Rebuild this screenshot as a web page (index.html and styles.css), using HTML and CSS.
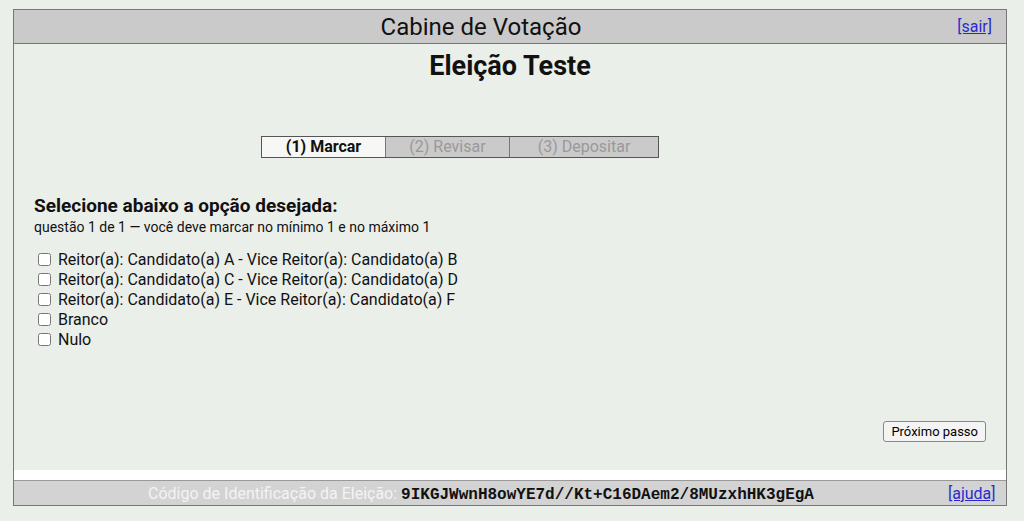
FILE: index.html
```html
<!DOCTYPE html>
<html lang="pt-BR">
<head>
    <meta charset="UTF-8">
    <title>Cabine de Votação</title>
    <link rel="stylesheet" href="styles.css">
</head>
<body>
    <div class="booth">
        <!-- Header -->
        <div class="bar top-bar">
            <div class="bar-title">Cabine de Votação</div>
            <div class="bar-link"><a href="#">[sair]</a></div>
        </div>

        <!-- Main content -->
        <div class="content">
            <h1>Eleição Teste</h1>

            <div class="steps">
                <div class="step current">(1) Marcar</div>
                <div class="step">(2) Revisar</div>
                <div class="step">(3) Depositar</div>
            </div>

            <div class="question">
                <h2>Selecione abaixo a opção desejada:</h2>
                <p class="hint">questão 1 de 1 — você deve marcar no mínimo 1 e no máximo 1</p>

                <ul class="answers">
                    <li><label><input type="checkbox"> Reitor(a): Candidato(a) A - Vice Reitor(a): Candidato(a) B</label></li>
                    <li><label><input type="checkbox"> Reitor(a): Candidato(a) C - Vice Reitor(a): Candidato(a) D</label></li>
                    <li><label><input type="checkbox"> Reitor(a): Candidato(a) E - Vice Reitor(a): Candidato(a) F</label></li>
                    <li><label><input type="checkbox"> Branco</label></li>
                    <li><label><input type="checkbox"> Nulo</label></li>
                </ul>
            </div>

            <div class="actions">
                <button type="button">Próximo passo</button>
            </div>
        </div>

        <!-- Footer -->
        <div class="bar bottom-bar">
            <div class="bar-title">Código de Identificação da Eleição: <code>9IKGJWwnH8owYE7d//Kt+C16DAem2/8MUzxhHK3gEgA</code></div>
            <div class="bar-link"><a href="#">[ajuda]</a></div>
        </div>
    </div>
</body>
</html>
```

FILE: styles.css
```css
body {
    font-family: Roboto, "Liberation Sans", sans-serif;
    margin: 0;
    padding: 9px 17px 0 13px;
    background: #ebefea;
    color: #111;
}

.booth {
    border: 1px solid #777;
    background: #fff;
}

.bar {
    display: flex;
    align-items: center;
}

.bar-title {
    flex: 1;
    text-align: center;
}

.bar-link {
    width: 58px;
    font-size: 16px;
    text-align: right;
    padding-right: 11px;
    box-sizing: border-box;
}

.bar-link a {
    color: #2a2ad0;
}

.top-bar {
    height: 33px;
    background: #cbcaca;
    border-bottom: 1px solid #777;
}

.top-bar .bar-title {
    font-size: 24px;
}

.top-bar .bar-link {
    padding-right: 14px;
}

.bottom-bar {
    height: 24px;
    background: #d3d3d3;
    border-top: 1px solid #999;
}

.bottom-bar .bar-title {
    font-size: 16px;
    color: #f3f3f3;
    padding-top: 1px;
}

.bottom-bar code {
    font-family: "Liberation Mono", monospace;
    font-size: 16px;
    font-weight: bold;
    color: #111;
}

.content {
    background: #ebefea;
    height: 426px;
    margin-bottom: 10px;
    padding: 0 20px;
    display: flex;
    flex-direction: column;
}

h1 {
    text-align: center;
    font-size: 27px;
    margin: 6px 0 0;
    line-height: 32px;
}

.steps {
    display: flex;
    align-self: center;
    margin: 54px 100px 0 0;
    border: 1px solid #555;
}

.step {
    font-size: 16px;
    line-height: 20px;
    text-align: center;
    color: #999;
    background: #cbcaca;
    border-left: 1px solid #777;
    width: 123px;
}

.step:last-child {
    width: 148px;
}

.step.current {
    border-left: none;
    background: #f7f7f5;
    color: #111;
    font-weight: bold;
}

.question h2 {
    font-size: 19px;
    margin: 36px 0 0;
}

.hint {
    font-size: 14px;
    margin: 2px 0 0;
}

.answers {
    list-style: none;
    margin: 15px 0 0;
    padding: 0;
    font-size: 16px;
    line-height: 20px;
}

.answers input {
    margin: 0 3px 0 4px;
    vertical-align: -1px;
}

.actions {
    margin-top: auto;
    margin-bottom: 28px;
    text-align: right;
}

.actions button {
    font-family: Roboto, "Liberation Sans", sans-serif;
    font-size: 13px;
    padding: 2px 7px;
    background: #f4f4f4;
    border: 1px solid #888;
    border-radius: 3px;
}
```
